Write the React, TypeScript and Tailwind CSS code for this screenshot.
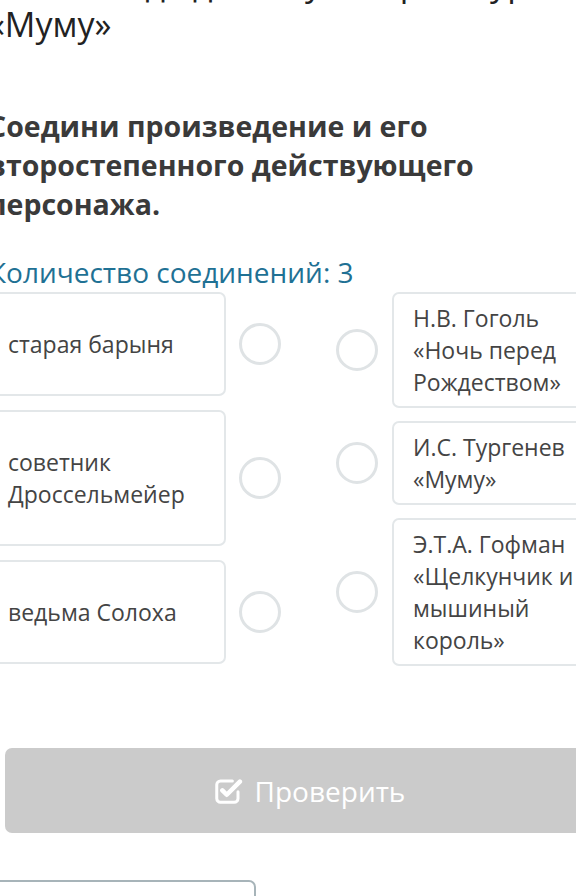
import React from 'react';

const leftItems = [
  { id: 'a', lines: ['старая барыня'] },
  { id: 'b', lines: ['советник', 'Дроссельмейер'] },
  { id: 'c', lines: ['ведьма Солоха'] },
];

const rightItems = [
  { id: 'x', lines: ['Н.В. Гоголь', '«Ночь перед', 'Рождеством»'] },
  { id: 'y', lines: ['И.С. Тургенев', '«Муму»'] },
  { id: 'z', lines: ['Э.Т.А. Гофман', '«Щелкунчик и', 'мышиный', 'король»'] },
];

function Dot() {
  return <div className="h-[42px] w-[42px] shrink-0 rounded-full border-[3px] border-[#dfe3e5] bg-white" />;
}

function CheckIcon() {
  return (
    <svg viewBox="0 0 24 24" className="h-[30px] w-[30px]" fill="none" aria-hidden="true">
      <path
        d="M20 12.5V18a3 3 0 0 1-3 3H6a3 3 0 0 1-3-3V7a3 3 0 0 1 3-3h9.5"
        stroke="white"
        strokeWidth="2.4"
        strokeLinecap="round"
      />
      <path
        d="M7.5 11.5l3.5 3.5L21.5 4.5"
        stroke="white"
        strokeWidth="3.6"
        strokeLinecap="round"
        strokeLinejoin="round"
      />
    </svg>
  );
}

export default function App() {
  return (
    <div
      className="relative h-[896px] w-[576px] overflow-hidden bg-white text-[#333]"
      style={{ fontFamily: '"Open Sans", "Noto Sans", sans-serif' }}
    >
      <div className="ml-[-12px] w-[640px]">
        <div className="mt-[-37px] pl-0 text-[34px] leading-[41px] text-[#222]">
          <p className="whitespace-nowrap">рассказ, где действует герой Тургенева в</p>
          <p>«Муму»</p>
        </div>

        <h2 className="mt-[62px] w-[520px] pl-0 text-[28.5px] font-bold leading-[39px] text-[#3a3a3a]">
          Соедини произведение и его второстепенного действующего персонажа.
        </h2>

        <p className="mt-[30px] pl-[1px] text-[28px] leading-[36px] text-[#1f7194]">
          Количество соединений: 3
        </p>

        <div className="mt-[2px] flex">
          <div className="flex flex-col gap-[14px]">
            {leftItems.map((item) => (
              <div key={item.id} className="flex items-center gap-[13px]">
                <div className="w-[238px] rounded-[7px] border-2 border-[#e3e7e9] py-[34px] pl-[18px] text-[23px] leading-[32px] text-[#444]">
                  {item.lines.map((l) => (
                    <div key={l}>{l}</div>
                  ))}
                </div>
                <Dot />
              </div>
            ))}
          </div>

          <div className="ml-[55px] flex flex-col gap-[13px]">
            {rightItems.map((item) => (
              <div key={item.id} className="flex items-center gap-[14px]">
                <Dot />
                <div className="w-[232px] rounded-[7px] border-2 border-[#e3e7e9] py-[8px] pl-[19px] text-[23px] leading-[32px] text-[#444]">
                  {item.lines.map((l) => (
                    <div key={l} className="whitespace-nowrap">{l}</div>
                  ))}
                </div>
              </div>
            ))}
          </div>
        </div>

        <button
          type="button"
          className="ml-[17px] mt-[82px] flex h-[85px] w-[608px] items-center justify-center gap-[12px] rounded-[7px] bg-[#cbcbcb] text-[28px] text-white"
        >
          <CheckIcon />
          <span>Проверить</span>
        </button>

        <div className="mt-[47px] h-[40px] w-[268px] rounded-[7px] border-2 border-[#a7b4b9]" />
      </div>
    </div>
  );
}
